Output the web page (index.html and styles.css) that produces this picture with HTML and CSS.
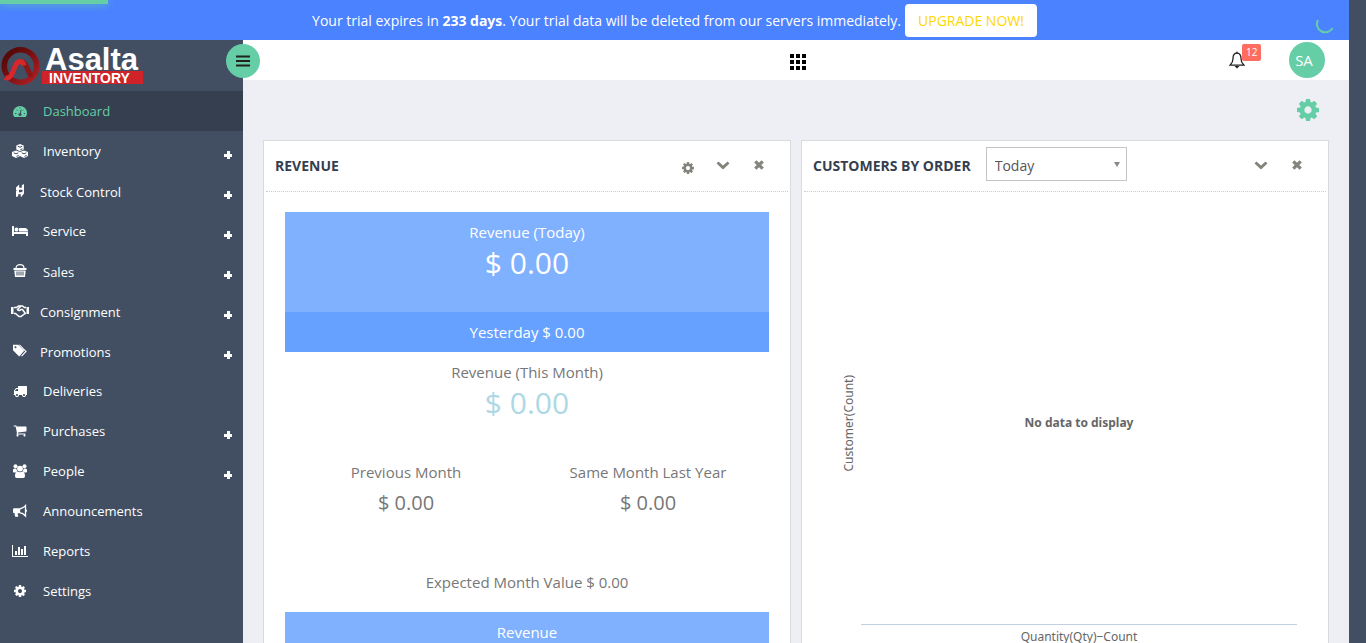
FILE: index.html
```html
<!DOCTYPE html>
<html lang="en">
<head>
<meta charset="utf-8">
<meta name="viewport" content="width=device-width, initial-scale=1">
<title>Asalta Inventory - Dashboard</title>
<link rel="stylesheet" href="styles.css">
</head>
<body>
<svg class="sprite" aria-hidden="true">
  <symbol id="cog" viewBox="128 128 1536 1536"><path d="M1152 896q0-106-75-181t-181-75-181 75-75 181 75 181 181 75 181-75 75-181zm512-109v222q0 12-8 23t-20 13l-185 28q-19 54-39 91 35 50 107 138 10 12 10 25t-9 23q-27 37-99 108t-94 71q-12 0-26-9l-138-108q-44 23-91 38-16 136-29 186-7 28-36 28h-222q-14 0-24.5-8.500t-11.500-21.500l-28-184q-49-16-90-37l-141 107q-10 9-25 9-14 0-25-11-126-114-165-168-7-10-7-23 0-12 8-23 15-21 51-66.500t54-70.500q-27-50-41-99l-183-27q-13-2-21-12.500t-8-23.500v-222q0-12 8-23t19-13l186-28q14-46 39-92-40-57-107-138-10-12-10-24 0-10 9-23 26-36 98.500-107.500t94.500-71.500q13 0 26 10l138 107q44-23 91-38 16-136 29-186 7-28 36-28h222q14 0 24.500 8.500t11.500 21.500l28 184q49 16 90 37l142-107q9-9 24-9 13 0 25 10 129 119 165 170 7 8 7 22 0 12-8 23-15 21-51 66.500t-54 70.500q26 50 41 98l183 28q13 2 21 12.500t8 23.500z"/></symbol>
  <symbol id="chevron" viewBox="0 0 14 14"><path d="M1.500 4.500L7 9.500l5.500-5" fill="none" stroke="currentColor" stroke-width="3"/></symbol>
  <symbol id="cross" viewBox="0 0 14 14"><path d="M3.300 3.300l7.400 7.400M10.700 3.300l-7.400 7.400" fill="none" stroke="currentColor" stroke-width="3.200"/></symbol>
</svg>

<div class="app">
  <div class="view">
    <div class="banner">
      <div class="progress"></div>
      <p class="banner-text">Your trial expires in <b>233 days</b>. Your trial data will be deleted from our servers immediately.</p>
      <a class="upgrade" href="#upgrade">UPGRADE NOW!</a>
      <svg class="spinner" viewBox="0 0 18 18" aria-hidden="true"><path d="M2 4A8 8 0 0 0 16.500 12" fill="none" stroke="currentColor" stroke-width="2"/></svg>
    </div>

    <div class="body">
      <aside class="sidebar">
        <a class="logo" href="#home">
          <svg viewBox="0 0 148 51" role="img" aria-label="Asalta Inventory">
            <defs><linearGradient id="ring" x1="0" y1="0" x2="1" y2="1"><stop offset="0" stop-color="#4c0505"/><stop offset=".45" stop-color="#741012"/><stop offset="1" stop-color="#b52024"/></linearGradient></defs>
            <circle cx="20.500" cy="26" r="16.200" fill="none" stroke="url(#ring)" stroke-width="5.600"/>
            <path d="M20 22c5-2 7 6 11 15" fill="none" stroke="#8c1719" stroke-width="5"/>
            <path d="M5 37.500c9 4 8-16 15-16q3 0 4 4" fill="none" stroke="#d8262b" stroke-width="5"/>
            <text class="logo-name" x="45" y="30">Asalta</text>
            <path d="M42 31h101v13H42z" fill="#cf2329"/>
            <text class="logo-sub" x="49" y="43">INVENTORY</text>
          </svg>
        </a>
        <button class="toggle" type="button" aria-label="Toggle menu"><svg viewBox="0 0 14 12"><path d="M0 1.500h14M0 6h14M0 10.500h14" stroke="currentColor" stroke-width="2.200"/></svg></button>
        <nav class="nav">
          <a class="item active" href="#dashboard"><svg class="ico" viewBox="0 0 16 14"><path d="M2.300 13a7 7 0 1 1 11.400 0z"/><path class="cut" d="M8 10.500L9.200 5.500M3 9.500h1.500M4.500 5.700l1 1M8 3.300v1M11.500 5.700l-.6.6M11.800 9.500H13"/><circle class="hole" cx="8" cy="10.500" r="1.600"/></svg><span>Dashboard</span></a>
          <a class="item" href="#inventory"><svg class="ico" viewBox="0 0 16 14"><path d="M8 0l3.700 1.500v3.900L8 7.200 4.300 5.400V1.500zM4 6.400l4 1.600v4L4 14 0 12V8zM12 6.400L16 8v4l-4 2-4-2V8z"/><path class="cut" d="M5.800 2.200L8 3.200l2.200-1M8.300 5.800l2.200-1M1.700 8.800L4 9.800l2.300-1M4.500 12.400l2.200-1.100M9.700 8.800l2.300 1 2.300-1M12.500 12.400l2.200-1.100"/></svg><span>Inventory</span><i class="plus"></i></a>
          <a class="item tight low" href="#stock"><svg class="ico" viewBox="0 0 16 14"><path d="M4 3.500L7.200.5v3.300h2.600V1.200L12 0v6.300l-1.500 1.500V5.800H7v2.400h2.300L12 6.500v3L8.800 13.500v-3.200H6.200v1.900L4 13V7.200l1-1H4z"/></svg><span>Stock Control</span><i class="plus"></i></a>
          <a class="item" href="#service"><svg class="ico" viewBox="0 128 2048 1536"><path d="M256 1024h1728q26 0 45 19t19 45v448h-256v-256h-1536v256h-256v-1216q0-26 19-45t45-19h128q26 0 45 19t19 45v704zm576-320q0-106-75-181t-181-75-181 75-75 181 75 181 181 75 181-75 75-181zm1216 256v-64q0-159-112.500-271.500t-271.500-112.500h-704q-26 0-45 19t-19 45v384h1152z"/></svg><span>Service</span><i class="plus"></i></a>
          <a class="item low" href="#sales"><svg class="ico" viewBox="0 0 16 14"><path d="M4 4.200c0-4.800 8-4.800 8 0" fill="none" stroke="currentColor" stroke-width="1.200"/><path d="M1.500 4h13v2h-13zM2.300 6.500h11.400L13 13H3z"/><path class="cut" d="M5 7.500v4M7 7.500v4M9 7.500v4M11 7.500v4"/></svg><span>Sales</span><i class="plus"></i></a>
          <a class="item tight low" href="#consignment"><svg class="ico" viewBox="1 0 16 14"><path d="M0 3h2.500v7H0zM15.500 3H18v7h-2.500z"/><path d="M3 3.500h2.500L7.500 2h4l2 1.500H15M3 9.500h1.500L8 12.500h2l4-3h1M9.500 2.500L6.500 5.500q1.500 2 3.500 0h1.500L14 9" fill="none" stroke="currentColor" stroke-width="1.500"/></svg><span>Consignment</span><i class="plus"></i></a>
          <a class="item tight low" href="#promotions"><svg class="ico" viewBox="0 0 16 14"><path d="M1 .8h5.200l6 6-5 5.600L1 6.200zM8 .8L14.800 7.400 10 12.600l-.9-.8L13.200 7.400 6.800.8z"/><circle class="hole" cx="3.500" cy="3.200" r="1"/></svg><span>Promotions</span><i class="plus"></i></a>
          <a class="item" href="#deliveries"><svg class="ico short" viewBox="0 128 1792 1536"><path d="M640 1408q0-52-38-90t-90-38-90 38-38 90 38 90 90 38 90-38 38-90zm-384-512h384v-256h-158q-13 0-22 9l-195 195q-9 9-9 22v30zm1280 512q0-52-38-90t-90-38-90 38-38 90 38 90 90 38 90-38 38-90zm256-1088v1024q0 15-4 26.500t-13.500 18.500-16.500 11.500-23.500 6-22.500 2-25.500 0-22.500-.5q0 106-75 181t-181 75-181-75-75-181h-384q0 106-75 181t-181 75-181-75-75-181h-64q-3 0-22.500.5t-25.500 0-22.500-2-23.500-6-16.500-11.500-13.500-18.500-4-26.500q0-26 19-45t45-19v-320q0-8-.5-35t0-38 2.500-34.500 6.500-37 14-30.500 22.500-30l198-198q19-19 50.500-32t58.500-13h160v-192q0-26 19-45t45-19h1024q26 0 45 19t19 45z"/></svg><span>Deliveries</span></a>
          <a class="item" href="#purchases"><svg class="ico short" viewBox="0 192 1792 1536"><path d="M704 1536q0 52-38 90t-90 38-90-38-38-90 38-90 90-38 90 38 38 90zm896 0q0 52-38 90t-90 38-90-38-38-90 38-90 90-38 90 38 38 90zm128-1088v512q0 24-16.500 42.500t-40.500 21.500l-1044 122q13 60 13 70 0 16-24 64h920q26 0 45 19t19 45-19 45-45 19h-1024q-26 0-45-19t-19-45q0-11 8-31.500t16-36 21.500-40 15.500-29.500l-177-823h-204q-26 0-45-19t-19-45 19-45 45-19h256q16 0 28.500 6.500t19.500 15.500 13 24.500 8 26 5.500 29.500 4.500 26h1201q26 0 45 19t19 45z"/></svg><span>Purchases</span><i class="plus"></i></a>
          <a class="item" href="#people"><svg class="ico" viewBox="0 0 16 14"><circle cx="3.500" cy="2.300" r="2"/><circle cx="12.500" cy="2.300" r="2"/><circle cx="8" cy="4.600" r="2.900"/><path d="M1 7.800V5.600q1-1.600 3.500-.8Q4.500 6 5.400 7L3.500 8.500H2q-1 0-1-.7zM15 7.800V5.600q-1-1.600-3.500-.8Q11.500 6 10.600 7l1.900 1.500H14q1 0 1-.7zM3 12.300c0-3 1-4.800 2.600-4.800q2.400 1.500 4.800 0C12 7.500 13 9.300 13 12.300q0 1.700-1.700 1.700H4.700Q3 14 3 12.300z"/></svg><span>People</span><i class="plus"></i></a>
          <a class="item" href="#announcements"><svg class="ico" viewBox="0 0 16 14"><path d="M1 5.500Q1 4.300 2.200 4.300H7v5H5.800q-.6 1.500.7 2.600-.3 1.300-3.300.8-.8-2-.4-3.400Q1 9.300 1 8.200z"/><path d="M7.500 5Q11 4.500 13.500 1.600v10.400Q11 9 7.500 8.600z" fill="none" stroke="currentColor" stroke-width="1.300"/><path d="M14 5.300q2 1.500 0 3z"/></svg><span>Announcements</span></a>
          <a class="item" href="#reports"><svg class="ico" viewBox="0 128 2048 1536"><path d="M640 896v512h-256v-512h256zm384-512v1024h-256v-1024h256zm1024 1152v128h-2048v-1536h128v1408h1920zm-640-896v768h-256v-768h256zm384-384v1152h-256v-1152h256z"/></svg><span>Reports</span></a>
          <a class="item" href="#settings"><svg class="ico short"><use href="#cog"/></svg><span>Settings</span></a>
        </nav>
      </aside>

      <main class="main">
        <header class="topbar">
          <button class="apps" type="button" aria-label="Apps"><svg viewBox="0 0 16 16"><path d="M0 0h4v4H0zM6 0h4v4H6zM12 0h4v4h-4zM0 6h4v4H0zM6 6h4v4H6zM12 6h4v4h-4zM0 12h4v4H0zM6 12h4v4H6zM12 12h4v4h-4z"/></svg></button>
          <div class="account">
            <button class="bell" type="button" aria-label="Notifications"><svg viewBox="0 0 16 18"><path d="M8 2.200C4.900 2.200 4 4.700 4 7.500c0 4-1.500 5-3 6.700h14c-1.500-1.700-3-2.700-3-6.700 0-2.800-.9-5.300-4-5.300z" fill="none" stroke="currentColor" stroke-width="1.300"/><path d="M7.200.8h1.600v1.500H7.200zM5.500 15h5L8 17.400z"/></svg><span class="badge">12</span></button>
            <button class="avatar" type="button">SA</button>
          </div>
        </header>

        <div class="content">
          <div class="tools"><button class="icon-btn config" type="button" aria-label="Configure dashboard"><svg><use href="#cog"/></svg></button></div>
          <div class="cards">
            <section class="card">
              <div class="card-head">
                <h2>REVENUE</h2>
                <div class="actions">
                  <button class="icon-btn" type="button" aria-label="Settings"><svg class="gear"><use href="#cog"/></svg></button>
                  <button class="icon-btn" type="button" aria-label="Collapse"><svg><use href="#chevron"/></svg></button>
                  <button class="icon-btn" type="button" aria-label="Close"><svg><use href="#cross"/></svg></button>
                </div>
              </div>
              <div class="card-body">
                <div class="stat tile"><p>Revenue (Today)</p><strong>$ 0.00</strong></div>
                <div class="strip">Yesterday $ 0.00</div>
                <div class="stat month"><p>Revenue (This Month)</p><strong>$ 0.00</strong></div>
                <div class="compare">
                  <div class="stat"><p>Previous Month</p><strong>$ 0.00</strong></div>
                  <div class="stat"><p>Same Month Last Year</p><strong>$ 0.00</strong></div>
                </div>
                <p class="expected">Expected Month Value $ 0.00</p>
                <div class="stat tile"><p>Revenue</p></div>
              </div>
            </section>

            <section class="card">
              <div class="card-head">
                <h2><label for="period">CUSTOMERS BY ORDER</label></h2>
                <div class="select"><select id="period"><option>Today</option><option>Yesterday</option></select><svg viewBox="0 0 8 6" aria-hidden="true"><path d="M1 0h6L4 5z"/></svg></div>
                <div class="actions">
                  <button class="icon-btn" type="button" aria-label="Collapse"><svg><use href="#chevron"/></svg></button>
                  <button class="icon-btn" type="button" aria-label="Close"><svg><use href="#cross"/></svg></button>
                </div>
              </div>
              <div class="card-body chart">
                <div class="y-title">Customer(Count)</div>
                <div class="plot">No data to display</div>
                <div class="x-title">Quantity(Qty)−Count</div>
              </div>
            </section>
          </div>
        </div>
      </main>
    </div>
  </div>
</div>
</body>
</html>
```
FILE: styles.css
```css
* { box-sizing: border-box; }
body { margin: 0; font-family: "Open Sans", sans-serif; font-size: 14px; color: #777; background: #424f63; }
p, h2 { margin: 0; }
a { color: inherit; text-decoration: none; }
button { padding: 0; border: 0; background: none; font: inherit; color: inherit; cursor: pointer; }
svg { display: block; fill: currentColor; }
.sprite { position: absolute; width: 0; height: 0; }

.app { height: 100vh; overflow: hidden; padding-right: 17px; }
.view { display: flex; flex-direction: column; min-height: 100%; }

.banner { position: relative; display: flex; align-items: center; justify-content: center; gap: 4px; height: 40px; background: #4a82ff; color: #fff; }
.progress { position: absolute; top: 0; left: 0; width: 8%; height: 4px; background: #65cea7; box-shadow: 0 0 8px #65cea7; }
.upgrade { padding: 0 13px; border-radius: 4px; line-height: 33px; background: #fff; color: #ffd700; }
.spinner { position: absolute; top: 16px; right: 15px; width: 18px; height: 18px; color: #65cea7; }

.body { display: flex; flex: 1; }
.sidebar { position: relative; flex: 0 0 243px; background: #424f63; color: #fff; }
.logo { display: block; height: 51px; }
.logo svg { width: 148px; height: 51px; }
.logo-name { font: bold 31px "Liberation Sans", Arial, sans-serif; fill: #fff; }
.logo-sub { font: bold 14px "Liberation Sans", Arial, sans-serif; fill: #fff; }
.toggle { position: absolute; z-index: 1; top: 4px; right: -17px; display: grid; place-items: center; width: 34px; height: 34px; border-radius: 50%; background: #65cea7; color: #222; }
.toggle svg { width: 14px; height: 12px; }
.item { display: flex; align-items: center; gap: 15px; height: 40px; padding: 0 11px 0 12px; font-size: 13px; }
.item.tight { gap: 12px; }
.item.low span { padding-top: 2px; }
.item.active { background: #353f4f; color: #65cea7; }
.ico { flex: 0 0 16px; width: 16px; height: 14px; overflow: visible; }
.ico.short { height: 12px; }
.cut { fill: none; stroke: #424f63; }
.hole { fill: #424f63; }
.plus { width: 8px; height: 8px; margin: 8px 0 0 auto; background: linear-gradient(#fff, #fff) 0 3px / 8px 3px no-repeat, linear-gradient(#fff, #fff) 3px 0 / 3px 8px no-repeat; }

.main { flex: 1; min-width: 0; background: #eeeff4; }
.topbar { position: relative; display: flex; align-items: center; justify-content: center; height: 40px; background: #fff; }
.apps { color: #000; padding: 4px 0 0 4px; }
.apps svg { width: 16px; height: 16px; }
.account { position: absolute; top: 0; right: 24px; display: flex; align-items: center; gap: 44px; height: 40px; }
.bell { position: relative; color: #222; }
.bell svg { width: 16px; height: 18px; }
.badge { position: absolute; top: -7px; left: 13px; padding: 0 4px; border-radius: 2px; background: #ff6c60; color: #fff; font-size: 10px; line-height: 17px; }
.avatar { width: 36px; height: 36px; padding-right: 6px; border-radius: 50%; background: #65cea7; color: #fff; font-size: 15px; }

.content { padding: 0 20px; }
.tools { display: flex; align-items: center; justify-content: flex-end; height: 60px; padding-right: 10px; }
.icon-btn { color: #84847c; }
.icon-btn svg { width: 14px; height: 14px; }
.icon-btn .gear { width: 12px; height: 12px; margin-top: 6px; }
.config { color: #65cea7; }
.config svg { width: 22px; height: 22px; }
.cards { display: grid; grid-template-columns: 1fr 1fr; gap: 10px; }
.card { border: 1px solid #d9dadd; background: #fff; }
.card-head { display: flex; align-items: center; height: 51px; margin: 0 2px; padding: 0 22px 2px 9px; border-bottom: 1px dotted #ccc; }
h2 { font-size: 14px; font-weight: 700; color: #353f4f; }
.actions { display: flex; align-items: center; gap: 22px; margin-left: auto; padding-bottom: 1px; }
.select { position: relative; margin: 0 0 2px 15px; }
.select select { display: block; appearance: none; width: 141px; height: 34px; padding: 2px 8px 0; border: 1px solid #c4c4c4; border-radius: 0; background: #fff; font: 14px "Open Sans", sans-serif; color: #555; }
.select svg { position: absolute; top: 15px; right: 6px; width: 8px; height: 6px; color: #888; pointer-events: none; }
.card-body { padding: 20px 21px; font-size: 15px; text-align: center; }

.stat { height: 100px; }
.stat p { line-height: 40px; }
.stat strong { display: block; font-size: 30px; font-weight: 400; line-height: 22px; }
.tile { background: #80b1ff; color: #fff; }
.strip { line-height: 40px; background: #66a1ff; color: #fff; }
.month strong { color: #add8e6; }
.compare { display: grid; grid-template-columns: 1fr 1fr; }
.compare .stat { height: 110px; }
.compare strong { font-size: 20px; }
.expected { line-height: 40px; margin-bottom: 10px; }

.chart { display: grid; grid-template-columns: 20px 1fr; grid-template-rows: 404px auto; column-gap: 3px; padding: 29px 31px 20px 36px; font: 12px "Noto Sans", sans-serif; color: #666; }
.y-title { place-self: center; writing-mode: vertical-rl; transform: rotate(180deg); }
.plot { display: grid; place-items: center; border-bottom: 1px solid #c0d0e0; font-weight: 700; }
.x-title { grid-column: 2; padding-top: 3px; }
```
